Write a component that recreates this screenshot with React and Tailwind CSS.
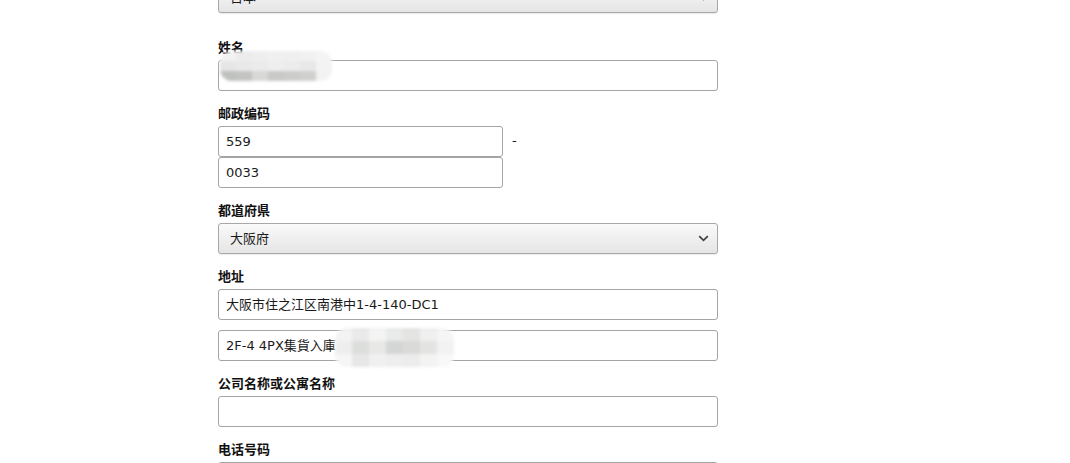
import React from "react";

const font = { fontFamily: '"DejaVu Sans", "Noto Sans CJK SC", sans-serif' };

function Label({ children }) {
  return (
    <div className="h-[18px] leading-[18px] mb-[3px] text-[13px] font-bold text-[#111]">
      {children}
    </div>
  );
}

function Box({ children, className = "" }) {
  return (
    <div
      className={
        "h-[31px] border border-[#a4a4a4] rounded-[3px] bg-white flex items-center pl-[7px] text-[13px] text-[#1a1a1a] " +
        className
      }
    >
      {children}
    </div>
  );
}

function Chevron() {
  return (
    <svg width="11" height="7" viewBox="0 0 11 7" className="shrink-0">
      <path d="M1.2 1.2 L5.5 5.3 L9.8 1.2" fill="none" stroke="#444" strokeWidth="1.8" />
    </svg>
  );
}

function Select({ value }) {
  return (
    <div className="h-[31px] border border-[#a8a8a8] rounded-[3px] bg-linear-to-b from-[#fafafa] to-[#e5e5e5] flex items-center justify-between pl-[11px] pr-[8px] text-[13px] text-[#1a1a1a] shadow-[0_1px_1px_rgba(0,0,0,0.08)]">
      <span>{value}</span>
      <Chevron />
    </div>
  );
}

const nameRows = [
  ["#f2f2f2", "#ececec", "#eeeeee", "#f0f0f0", "#efefef", "#f1f1f1", "#f4f4f4"],
  ["#e6e6e6", "#e9e9e9", "#ebebeb", "#eeeeee", "#ececec", "#e8e8e8", "#f3f3f3"],
  ["#bfc1be", "#c4c5c3", "#d8d9d7", "#c9cac8", "#cccdcb", "#d0d1cf", "#f2f2f2"],
];

const addrRows = [
  ["#f3f3f3", "#eaeaea", "#f4f4f4", "#e9eaea", "#e4e5e3", "#efefef", "#f5f5f5"],
  ["#eeeeee", "#dcdedc", "#e8e8e6", "#d3d6d4", "#dadbd9", "#e3e3e1", "#f2f2f2"],
  ["#f6f6f6", "#e7e7e7", "#f0f0f0", "#eeeeee", "#ececec", "#f3f3f3", "#f8f8f8"],
];

function Mosaic({ rows, cell, className }) {
  return (
    <div className={"absolute flex flex-col blur-[1.5px] rounded-[12px] overflow-hidden " + className}>
      {rows.map((r, i) => (
        <div key={i} className="flex">
          {r.map((c, j) => (
            <div key={j} className={cell} style={{ backgroundColor: c }} />
          ))}
        </div>
      ))}
    </div>
  );
}

export default function App() {
  return (
    <div className="w-[1070px] h-[463px] overflow-hidden bg-white" style={font}>
      <div className="ml-[218px] w-[500px] mt-[-18px]">
        <Select value="日本" />

        <div className="mt-[26px]">
          <Label>姓名</Label>
          <div className="relative">
            <Box />
            <Mosaic rows={nameRows} cell="w-[16px] h-[10px]" className="left-[2px] top-[-9px]" />
          </div>
        </div>

        <div className="mt-[14px]">
          <Label>邮政编码</Label>
          <div className="flex items-center">
            <Box className="w-[285px]">559</Box>
            <span className="ml-[9px] text-[13px] text-[#1a1a1a] -mt-[2px]">-</span>
          </div>
          <Box className="w-[285px]">0033</Box>
        </div>

        <div className="mt-[14px]">
          <Label>都道府県</Label>
          <Select value="大阪府" />
        </div>

        <div className="mt-[14px]">
          <Label>地址</Label>
          <div className="flex flex-col gap-[10px]">
            <Box>大阪市住之江区南港中1-4-140-DC1</Box>
            <div className="relative">
              <Box>2F-4 4PX集貨入庫</Box>
              <Mosaic rows={addrRows} cell="w-[17px] h-[13px]" className="left-[117px] top-[-2px]" />
            </div>
          </div>
        </div>

        <div className="mt-[14px]">
          <Label>公司名称或公寓名称</Label>
          <Box />
        </div>

        <div className="mt-[14px]">
          <Label>电话号码</Label>
          <Box />
        </div>
      </div>
    </div>
  );
}
